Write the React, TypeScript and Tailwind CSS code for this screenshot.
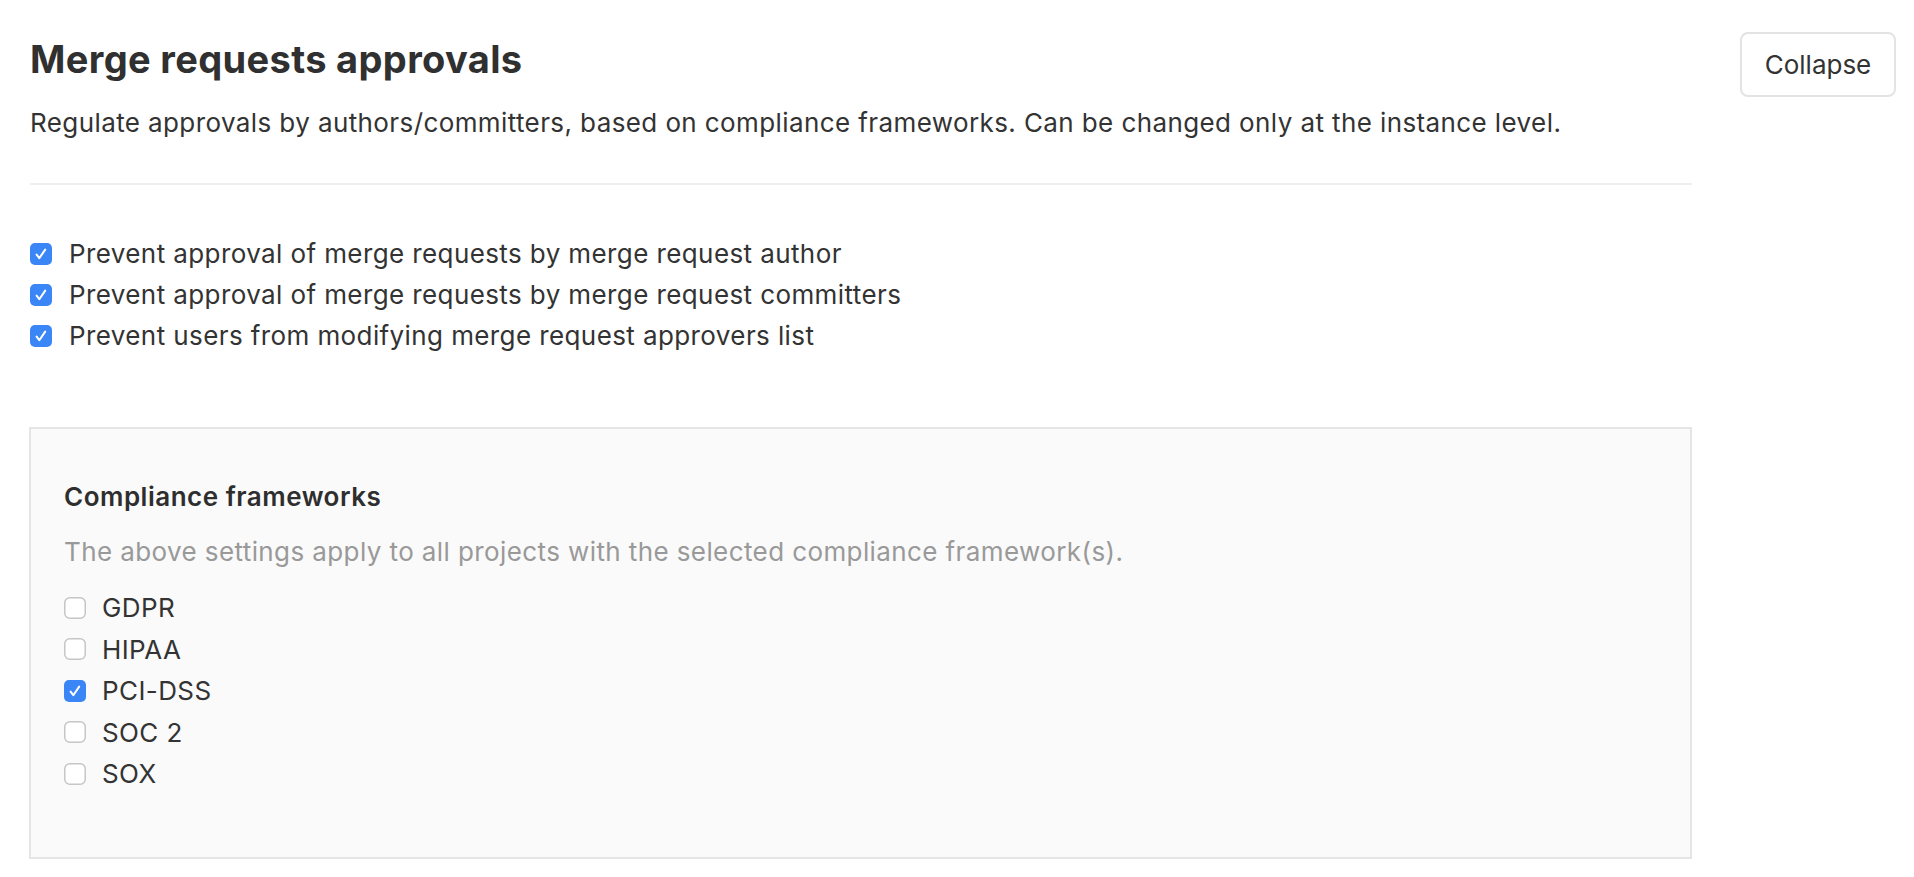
import React from "react";

function Box({ checked }: { checked: boolean }) {
  if (checked) {
    return (
      <svg width="22" height="22" viewBox="0 0 22 22" className="shrink-0">
        <rect x="0" y="0" width="22" height="22" rx="5" fill="#3b86f7" />
        <path d="M6.6 11.6 L9.3 15.2 L15.2 6.6" fill="none" stroke="#ffffff" strokeWidth="2" strokeLinecap="round" strokeLinejoin="round" />
      </svg>
    );
  }
  return (
    <svg width="22" height="22" viewBox="0 0 22 22" className="shrink-0">
      <rect x="0.75" y="0.75" width="20.5" height="20.5" rx="5" fill="#ffffff" stroke="#c6c6c6" strokeWidth="1.5" />
    </svg>
  );
}

function Row({ checked, label, cls }: { checked: boolean; label: string; cls: string }) {
  return (
    <label className={`flex items-center ${cls} text-[26px] tracking-[0.4px] text-[#333333]`}>
      <Box checked={checked} />
      <span>{label}</span>
    </label>
  );
}

export default function App() {
  const top = [
    "Prevent approval of merge requests by merge request author",
    "Prevent approval of merge requests by merge request committers",
    "Prevent users from modifying merge request approvers list",
  ];
  const frameworks: [string, boolean][] = [
    ["GDPR", false],
    ["HIPAA", false],
    ["PCI-DSS", true],
    ["SOC 2", false],
    ["SOX", false],
  ];
  return (
    <div className="min-h-screen bg-white font-['Inter',sans-serif] text-[#333333]">
      <div className="flex items-start pl-[30px] pr-[18px] pt-[32px]">
        <div className="w-[1662px] shrink-0">
          <h2 className="mt-[5px] text-[38px] leading-[44px] font-bold tracking-[0.35px] text-[#303030]">
            Merge requests approvals
          </h2>
          <p className="mt-[24px] text-[26px] leading-[36px] tracking-[0.4px] text-[#333333]">
            Regulate approvals by authors/committers, based on compliance frameworks. Can be changed only at the instance level.
          </p>
          <div className="mt-[42px] h-[2px] bg-[#efefef]" />
          <div className="mt-[48px] flex flex-col">
            {top.map((t) => (
              <Row key={t} checked={true} label={t} cls="h-[41px] gap-[17px]" />
            ))}
          </div>
          <div className="mt-[71px] -ml-[1px] border-2 border-[#e5e5e5] bg-[#fafafa] pl-[33px] pt-[50px] pb-[62px]">
            <h3 className="text-[26px] leading-[36px] font-semibold tracking-[0.5px] text-[#2e2e2e]">Compliance frameworks</h3>
            <p className="mt-[19px] text-[26px] leading-[36px] tracking-[0.4px] text-[#999999]">
              The above settings apply to all projects with the selected compliance framework(s).
            </p>
            <div className="mt-[17px] flex flex-col">
              {frameworks.map(([n, c]) => (
                <Row key={n} checked={c} label={n} cls="h-[41.5px] gap-[16px]" />
              ))}
            </div>
          </div>
        </div>
        <button className="ml-auto h-[65px] w-[156px] rounded-[8px] border-2 border-[#e3e3e3] bg-white text-[26px] text-[#333333]">
          Collapse
        </button>
      </div>
    </div>
  );
}
